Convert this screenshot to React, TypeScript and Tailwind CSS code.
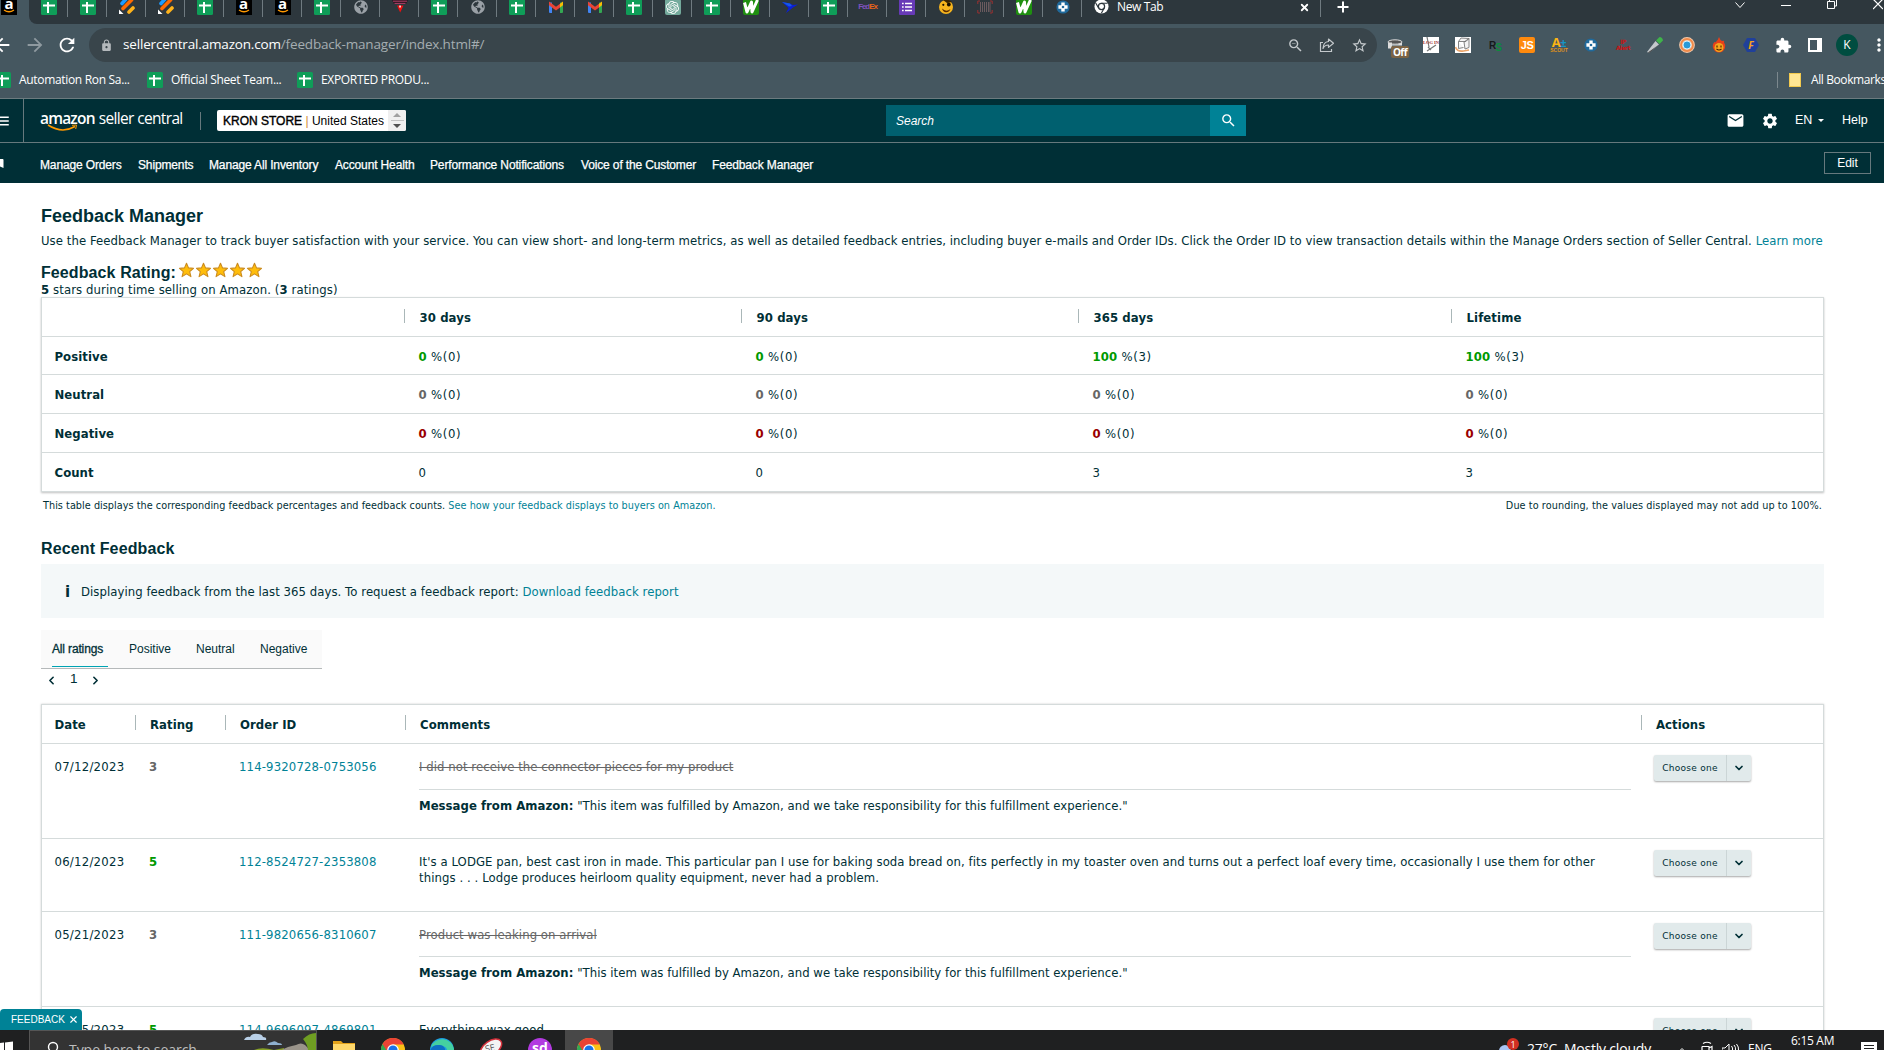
import { Fragment, type ReactNode } from "react";
import {
  MdArrowBack,
  MdArrowForward,
  MdBookmark,
  MdEmail,
  MdExtension,
  MdLock,
  MdMenu,
  MdMoreVert,
  MdRefresh,
  MdSearch,
  MdSettings,
  MdStarBorder,
  MdZoomOut,
} from "react-icons/md";
import { FaGlobeAmericas } from "react-icons/fa";
import { SiOpenai } from "react-icons/si";
import { ChevronDown, ChevronLeft, ChevronRight, ChevronUp, X } from "lucide-react";

type TabKind =
  | "sheets"
  | "pen"
  | "amazon"
  | "globe"
  | "triangle"
  | "gmail"
  | "openai"
  | "w"
  | "bird"
  | "fedex"
  | "forms"
  | "face"
  | "barcode"
  | "plus";

const tabs: TabKind[] = [
  "sheets",
  "sheets",
  "pen",
  "pen",
  "sheets",
  "amazon",
  "amazon",
  "sheets",
  "globe",
  "triangle",
  "sheets",
  "globe",
  "sheets",
  "gmail",
  "gmail",
  "sheets",
  "openai",
  "sheets",
  "w",
  "bird",
  "sheets",
  "fedex",
  "forms",
  "face",
  "barcode",
  "w",
  "plus",
];

function SheetsIcon() {
  return (
    <svg width="16" height="16" viewBox="0 0 16 16" className="shrink-0">
      <rect width="16" height="16" rx="1.5" fill="#0f9d58" />
      <path d="M2 6.5h12M7 3v11" stroke="#fff" strokeWidth="2" />
    </svg>
  );
}

function AmazonIcon() {
  return (
    <div className="relative flex h-4 w-4 shrink-0 items-center justify-center bg-black">
      <span className="-mt-[7px] font-['Open_Sans',sans-serif] text-[15px] leading-none font-bold text-white">
        a
      </span>
      <svg
        width="14"
        height="4"
        viewBox="0 0 14 4"
        className="absolute bottom-0.5 left-px"
      >
        <path d="M2 1q5 3.5 10 0" stroke="#ff9900" fill="none" strokeWidth="1.3" />
      </svg>
    </div>
  );
}

function PlusDisc() {
  return (
    <svg width="14" height="14" viewBox="0 0 14 14">
      <circle cx="7" cy="7" r="6.6" fill="#206a9c" />
      <path d="M7 2.4v9.2M2.4 7h9.2" stroke="#fff" strokeWidth="3.4" />
      <circle cx="7" cy="7" r="1.3" fill="#206a9c" />
    </svg>
  );
}

function ChromeIcon({ size = 22 }: { size?: number }) {
  return (
    <svg width={size} height={size} viewBox="0 0 24 24" className="shrink-0">
      <circle cx="12" cy="12" r="12" fill="#fbc116" />
      <path d="M1.6 6A12 12 0 0 0 12 24l5-9-5-3z" fill="#34a853" />
      <path d="M12 6.5h10.7A12 12 0 0 0 1.6 6l5.5 9z" fill="#ea4335" />
      <circle cx="12" cy="12" r="5.8" fill="#fff" />
      <circle cx="12" cy="12" r="4.6" fill="#1a73e8" />
    </svg>
  );
}

function TabIcon({ kind }: { kind: TabKind }) {
  switch (kind) {
    case "sheets":
      return <SheetsIcon />;
    case "amazon":
      return <AmazonIcon />;
    case "plus":
      return <PlusDisc />;
    case "pen":
      return (
        <svg width="16" height="16" viewBox="0 0 16 16">
          <g strokeWidth="3.6" strokeLinecap="round">
            <path d="M3 4.5 7 0" stroke="#1e9bff" />
            <path d="M4 9.5 12.5 1" stroke="#ff6a00" />
            <path d="M10 13l4-4" stroke="#ffb31a" />
          </g>
          <path d="M0 10.5V15h4.5z" fill="#fff" />
        </svg>
      );
    case "globe":
      return <FaGlobeAmericas className="h-[14px] w-[14px] text-[#9aa0a6]" />;
    case "triangle":
      return (
        <svg width="16" height="16" viewBox="0 0 16 16">
          <path d="M0 1h16l-2 4H2z" fill="#2a1520" />
          <path d="M1 2.2h14M2.5 4.4h11" stroke="#b04068" strokeWidth="1" />
          <path d="M5 6.5h6.5L8.2 13.5z" fill="#f01010" />
          <path d="M7.3 6.5h1.5v2H7.3z" fill="#fff" />
        </svg>
      );
    case "gmail":
      return (
        <svg width="16" height="16" viewBox="0 0 16 16">
          <path d="M1 3.5h3V14H2a1 1 0 0 1-1-1z" fill="#4285f4" />
          <path d="M12 3.5h3V13a1 1 0 0 1-1 1h-2z" fill="#34a853" />
          <path d="M12 4.8 15 2.5v3.7L12 8.4z" fill="#fbbc04" />
          <path d="M1 2.5 8 7.7l4-3V8.4L8 11.4 1 6.2z" fill="#ea4335" />
        </svg>
      );
    case "openai":
      return (
        <div className="flex h-4 w-4 items-center justify-center rounded-[2px] bg-[#74aa9c]">
          <SiOpenai className="h-[13px] w-[13px] text-white" />
        </div>
      );
    case "w":
      return (
        <svg width="16" height="16" viewBox="0 0 16 16">
          <rect width="16" height="16" rx="2" fill="#1f8f10" />
          <path
            d="M1.5 3.5 4 13 8.5 3l.5 10 5.5-12"
            fill="none"
            stroke="#fff"
            strokeWidth="3"
            strokeLinejoin="round"
          />
        </svg>
      );
    case "bird":
      return (
        <svg width="16" height="16" viewBox="0 0 16 16">
          <path d="M0 3l8 1.5 3 1.5 5-.5-5 3-2.5 2L4 14l2.5-5z" fill="#0a1fd8" />
          <path d="M0 3l8 1.5 2 2.5-3 .5z" fill="#1558e8" />
        </svg>
      );
    case "fedex":
      return (
        <span className="flex font-['Liberation_Sans',sans-serif] text-[8px] font-bold tracking-[-1.1px]">
          <span className="text-[#7d52bd]">Fed</span>
          <span className="text-[#e8641a]">Ex</span>
        </span>
      );
    case "forms":
      return (
        <svg width="16" height="16" viewBox="0 0 16 16">
          <rect width="16" height="16" rx="1" fill="#673ab7" />
          <path
            d="M3 4.5h1.7M6 4.5h7M3 8h1.7M6 8h7M3 11.5h1.7M6 11.5h7"
            stroke="#fff"
            strokeWidth="1.6"
          />
        </svg>
      );
    case "face":
      return (
        <svg width="16" height="16" viewBox="0 0 16 16">
          <circle cx="8" cy="8" r="7" fill="#f7b51d" />
          <path d="M5 1Q9-1 14 3L9 4z" fill="#3a2400" />
          <path d="M4 9.5q4 4 8.5.5-1.5 3.5-4.5 3.3T4 9.5z" fill="#5a2b00" />
          <circle cx="5.3" cy="5.8" r="1.1" fill="#1a1000" />
          <circle cx="10.8" cy="5.5" r="1.9" fill="#1a1000" />
        </svg>
      );
    case "barcode":
      return (
        <svg width="16" height="16" viewBox="0 0 16 16">
          <path
            d="M3.5 3v10M5.5 3v10M7.5 3v10M9.5 3v10M11.5 3v10M13 3v10"
            stroke="#6a5a5e"
            strokeWidth="1"
          />
          <path
            d="M3 2H.8v3M.8 11v3H3M13 2h2.2v3M15.2 11v3H13"
            fill="none"
            stroke="#9a3030"
          />
        </svg>
      );
  }
}

const bookmarks = [
  { label: "Automation Ron Sa...", width: "w-[152px]" },
  { label: "Official Sheet Team...", width: "w-[150px]" },
  { label: "EXPORTED PRODU...", width: "w-[150px]" },
];

function Cell({ children }: { children: ReactNode }) {
  return (
    <div className="flex h-8 w-8 shrink-0 items-center justify-center">
      {children}
    </div>
  );
}

function BrowserChrome() {
  return (
    <div className="h-[98px] bg-[#455760] font-['Open_Sans',sans-serif] text-white">
      {/* Tab strip */}
      <div className="flex h-6">
        <div className="w-[29px] shrink-0 bg-[#455760] pl-px">
          <div className="-mt-px">
            <AmazonIcon />
          </div>
        </div>
        <div className="flex min-w-0 flex-1 rounded-bl-lg bg-[#2d373d]">
          {tabs.map((kind, i) => (
            <div
              key={i}
              className="flex h-[17px] w-[39px] shrink-0 items-center justify-center border-r border-[#6f7a80]"
            >
              <div className="-mt-[3px] ml-px">
                <TabIcon kind={kind} />
              </div>
            </div>
          ))}
          <div className="flex h-[17px] w-[239px] shrink-0 items-center border-r border-[#6f7a80] pl-3">
            <svg width="15" height="15" viewBox="0 0 16 16" className="-mt-1">
              <circle cx="8" cy="8" r="7.5" fill="#fff" />
              <circle cx="8" cy="8" r="3.3" fill="#fff" stroke="#2d373d" strokeWidth="1.3" />
              <path
                d="M8 4.5h6.5M5 9.7 1.8 4.2M11 9.7 7.8 15.3"
                stroke="#2d373d"
                strokeWidth="1.2"
              />
            </svg>
            <span className="-mt-[3px] ml-2 text-[12px] leading-none tracking-[-0.35px]">
              New Tab
            </span>
            <X className="-mt-[3px] ml-auto mr-2.5 h-[11px] w-[11px]" strokeWidth={4} />
          </div>
          <svg width="12" height="12" viewBox="0 0 12 12" className="ml-4 mt-px">
            <path d="M6 .5v11M.5 6h11" stroke="#fff" strokeWidth="2" />
          </svg>
          <div className="ml-auto mr-px flex shrink-0 items-center gap-[36px] self-start">
            <svg width="10" height="8" viewBox="0 0 10 8">
              <path d="M.5 1.5 5 6.5l4.5-5" fill="none" stroke="#fff" />
            </svg>
            <svg width="10" height="8" viewBox="0 0 10 8">
              <path d="M0 4.5h10" stroke="#fff" />
            </svg>
            <svg width="10" height="10" viewBox="0 0 10 10">
              <path d="M.5 1.5h7v7h-7zM2.5 1V-.5M9.500 0v6H8" fill="none" stroke="#fff" />
            </svg>
            <svg width="10" height="10" viewBox="0 0 10 10">
              <path d="M0-1l10 10M10-1 0 9" stroke="#fff" strokeWidth="1.2" />
            </svg>
          </div>
        </div>
      </div>

      {/* Address bar */}
      <div className="flex h-[42px] items-center overflow-hidden">
        <div className="flex w-[89px] shrink-0 items-center">
          <MdArrowBack className="-ml-[9px] h-[22px] w-[22px] shrink-0" />
          <MdArrowForward className="ml-[11px] h-[22px] w-[22px] shrink-0 text-[#8f9aa0]" />
          <MdRefresh className="ml-[10px] h-[22px] w-[22px] shrink-0" />
        </div>
        <div className="flex h-[34px] w-[1288px] shrink-0 items-center rounded-full bg-[#39454b] pl-[11px]">
          <MdLock className="h-[13px] w-[13px] text-[#b4b9bc]" />
          <div className="ml-[10px] text-[13.5px] leading-none tracking-[-0.17px] text-[#a5adb1]">
            <span className="text-white">sellercentral.amazon.com</span>
            /feedback-manager/index.html#/
          </div>
          <div className="ml-auto flex pr-[2px] text-[#c4c9cc]">
            <Cell>
              <MdZoomOut className="h-[17px] w-[17px]" />
            </Cell>
            <Cell>
              <svg width="16" height="16" viewBox="0 0 16 16" fill="none" stroke="currentColor">
                <path d="M4 5.5H1.5v9h11V12" strokeWidth="1.2" />
                <path
                  d="M9.5 2l5 4.2-5 4.2V8Q5.5 8 4 11.5 4.3 5 9.5 4.5z"
                  strokeWidth="1.2"
                  strokeLinejoin="round"
                />
              </svg>
            </Cell>
            <Cell>
              <MdStarBorder className="h-[17px] w-[17px]" />
            </Cell>
          </div>
        </div>
        <div className="ml-[6px] flex">
          <Cell>
            <div className="relative h-4 w-4">
              <svg width="18" height="14" viewBox="0 0 18 14" className="absolute -left-1 top-0.5">
                <ellipse cx="8" cy="3" rx="7" ry="2.2" fill="#555" stroke="#ddd" />
                <path d="M1 3.5h4v6H1zM1 3.5Q8 8 15 3.5v3H5" fill="#ddd" />
              </svg>
              <span className="absolute left-0 top-[9px] flex h-3 w-[18px] items-center justify-center rounded-[2px] bg-[#7b6345] text-[10px] leading-none font-bold tracking-[-0.5px]">
                Off
              </span>
            </div>
          </Cell>
          <Cell>
            <div className="relative flex h-4 w-4 items-center justify-center overflow-hidden bg-white">
              <svg width="16" height="16" viewBox="0 0 16 16" className="absolute">
                <path d="M4 0l2 10M4 14l9-6M5 10l3 3" stroke="#777" strokeWidth="1.2" />
              </svg>
              <span className="relative -mt-1 whitespace-nowrap font-['Liberation_Serif',serif] text-[4.5px] leading-none font-bold text-[#a03030]">
                LOG IN
              </span>
            </div>
          </Cell>
          <Cell>
            <svg width="16" height="16" viewBox="0 0 16 16">
              <rect width="16" height="16" fill="#fff" />
              <path
                d="M3.5 4.5 6 1l8 .5-3 3zM3.5 4.5v7l5-1M9 5l5-3.5v9l-4 1.5z"
                fill="#f4f4f4"
                stroke="#777"
                strokeWidth=".9"
              />
              <path d="M.5 10q1.5 5 8 4l5.5-1" fill="none" stroke="#eba56a" strokeWidth="1.6" />
            </svg>
          </Cell>
          <Cell>
            <span className="font-['Liberation_Sans',sans-serif] text-[10px] font-bold tracking-[-1px]">
              <span className="text-[#15191b]">R</span>
              <span className="relative top-0.5 text-[#0c8a3e]">S</span>
            </span>
          </Cell>
          <Cell>
            <span className="flex h-4 w-4 items-center justify-center rounded-[2px] bg-[#ff8a0d] font-['Liberation_Sans',sans-serif] text-[11px] leading-none font-bold tracking-[-0.5px]">
              JS
            </span>
          </Cell>
          <Cell>
            <span className="flex flex-col items-center font-bold">
              <span className="text-[13px] leading-[10px] tracking-[-0.5px] text-[#fcb514]">
                A<span className="text-[11px] text-[#1596c8]">±</span>
              </span>
              <span className="font-['Liberation_Sans',sans-serif] text-[5px] leading-[5px] text-[#e0941a]">
                SCOUT
              </span>
            </span>
          </Cell>
          <Cell>
            <PlusDisc />
          </Cell>
          <Cell>
            <span className="text-center font-['DejaVu_Sans',sans-serif] text-[6px] leading-[6px] font-bold tracking-[-0.5px] text-[#c81414]">
              IP
              <br />
              Alert
            </span>
          </Cell>
          <Cell>
            <svg width="16" height="16" viewBox="0 0 16 16">
              <path d="M8.5 4l3.5 3.5L2 16l-2-1z" fill="#c4c9cc" />
              <path d="M12 7.5 2 16l-1-.5z" fill="#333" />
              <path d="M9 3.5 12.5 0q3 0 3.5 3.5L12.5 7z" fill="#3fb34a" />
            </svg>
          </Cell>
          <Cell>
            <svg width="16" height="16" viewBox="0 0 16 16">
              <circle cx="8" cy="8" r="7.9" fill="#f4c8a8" />
              <circle cx="8" cy="8" r="6" fill="none" stroke="#f08a4a" strokeWidth="1.8" />
              <circle cx="8" cy="8" r="4" fill="#2a9ad8" stroke="#d9f0fa" />
            </svg>
          </Cell>
          <Cell>
            <svg width="14" height="16" viewBox="0 0 14 16">
              <path
                d="M7 0q1 3 3 4 3-1 2 1.5Q14 8 13 11 11 15.5 7 15.5T1 11Q0 7.5 2.5 5 4 6 4.5 4 6 3 7 0z"
                fill="#e8401a"
              />
              <circle cx="7" cy="10.5" r="4.5" fill="#f6a51c" />
              <path
                d="M5 8.5v2M9 8.5v2M4.5 12q2.5 2 5 0"
                fill="none"
                stroke="#4a1a00"
                strokeWidth="1.1"
              />
            </svg>
          </Cell>
          <Cell>
            <span className="flex h-[14px] w-4 items-center justify-center bg-[#20409a] text-[10px] leading-none font-bold italic text-[#f5a01c] [clip-path:polygon(25%_0,75%_0,100%_50%,75%_100%,25%_100%,0_50%)]">
              F
            </span>
          </Cell>
          <Cell>
            <MdExtension className="h-[17px] w-[17px]" />
          </Cell>
          <Cell>
            <div className="h-[14px] w-[14px] border-2 border-r-[5px] border-white" />
          </Cell>
          <Cell>
            <div className="flex h-[22px] w-[22px] items-center justify-center rounded-full bg-[#004d40] text-[12px] leading-none">
              K
            </div>
          </Cell>
          <Cell>
            <MdMoreVert className="h-[20px] w-[20px] shrink-0" />
          </Cell>
        </div>
      </div>

      {/* Bookmarks */}
      <div className="flex h-7 items-center text-[12px] leading-none">
        <div className="-ml-[5px] flex">
          {bookmarks.map((b) => (
            <div
              key={b.label}
              className={`flex shrink-0 items-center whitespace-nowrap tracking-[-0.32px] ${b.width}`}
            >
              <SheetsIcon />
              <span className="ml-2">{b.label}</span>
            </div>
          ))}
        </div>
        <div className="ml-auto flex h-4 w-[107px] shrink-0 items-center border-l border-[#7c888e] pl-[11px]">
          <div className="h-[14px] w-3 shrink-0 border border-[#f3ca4e] bg-[#ffe694]" />
          <span className="ml-[10px] whitespace-nowrap tracking-[-0.4px]">All Bookmarks</span>
        </div>
      </div>
    </div>
  );
}

const quickLinks = [
  { label: "Manage Orders", width: "w-[98px]" },
  { label: "Shipments", width: "w-[71px]" },
  { label: "Manage All Inventory", width: "w-[126px]" },
  { label: "Account Health", width: "w-[95px]" },
  { label: "Performance Notifications", width: "w-[151px]" },
  { label: "Voice of the Customer", width: "w-[131px]" },
  { label: "Feedback Manager", width: "w-[110px]" },
];

function SellerHeader() {
  return (
    <div className="border-t border-[#6c7b7f] bg-[#002f36] font-['Liberation_Sans',sans-serif] text-white">
      <div className="flex h-[44px] items-center border-b border-[#66797d]">
        <div className="flex h-full w-6 shrink-0 items-center border-r border-[#66797d]">
          <MdMenu className="-ml-[7px] h-[18px] w-[18px]" />
        </div>
        <div className="relative ml-4 h-[23px] w-[144px] shrink-0 whitespace-nowrap">
          <div className="flex items-baseline gap-1 font-['Open_Sans',sans-serif] text-[15.5px] leading-[18px]">
            <span className="font-semibold tracking-[-0.8px]">amazon</span>
            <span className="tracking-[-0.65px]">seller central</span>
          </div>
          <svg width="34" height="8" viewBox="0 0 34 8" className="absolute left-[7px] top-[15px]">
            <path d="M1 1q14 9 27 1.5" fill="none" stroke="#f90" strokeWidth="1.5" />
            <path d="M25 1.3l4.500-.3-.8 4" fill="none" stroke="#f90" />
          </svg>
        </div>
        <div className="ml-4 h-[18px] w-px bg-[#66797d]" />
        <div className="ml-4 flex h-[21px] w-[189px] shrink-0 items-center rounded-[2px] bg-white pl-[6px] text-[12px] leading-none text-black">
          <span className="whitespace-nowrap">
            <span className="[-webkit-text-stroke:0.4px_#000]">KRON STORE</span>{" "}
            <span className="text-[#d08a30]">|</span> United States
          </span>
          <div className="ml-auto flex h-full w-[18px] flex-col items-center justify-center gap-[3px] rounded-r-[2px] bg-[#efefef]">
            <div className="h-0 w-0 border-x-4 border-b-4 border-x-transparent border-b-[#a0a0a0]" />
            <div className="h-px w-[13px] bg-[#c0c0c0]" />
            <div className="h-0 w-0 border-x-4 border-t-4 border-x-transparent border-t-[#505050]" />
          </div>
        </div>
        <div className="ml-[480px] flex h-[31px] w-[360px] shrink-0 bg-[#00606f]">
          <div className="flex flex-1 items-center pl-[10px] text-[12px] italic">Search</div>
          <div className="flex w-9 items-center justify-center bg-[#008296]">
            <MdSearch className="h-[17px] w-[17px]" />
          </div>
        </div>
        <MdEmail className="ml-auto h-[19px] w-[19px] shrink-0" />
        <MdSettings className="ml-[16px] h-[18px] w-[18px] shrink-0" />
        <div className="ml-4 flex w-[47px] shrink-0 items-center text-[12.5px]">
          EN
          <div className="ml-[6px] h-0 w-0 border-x-[3.5px] border-t-[3.5px] border-x-transparent border-t-white" />
        </div>
        <div className="w-[42px] shrink-0 text-[12.5px]">Help</div>
      </div>
      <div className="flex h-[40px] items-center text-[12px]">
        <MdBookmark className="-ml-[6px] h-[15px] w-[12px] shrink-0" />
        <div className="ml-[34px] mt-[3px] flex whitespace-nowrap tracking-[-0.14px] [-webkit-text-stroke:0.25px_white]">
          {quickLinks.map((l) => (
            <span key={l.label} className={`shrink-0 ${l.width}`}>
              {l.label}
            </span>
          ))}
        </div>
        <div className="ml-auto mr-[13px] flex h-[22px] w-[47px] items-center justify-center border border-[#66797d] text-[12px]">
          Edit
        </div>
      </div>
    </div>
  );
}

const periods = [
  { label: "30 days", positive: 0, positiveCount: 0, count: 0 },
  { label: "90 days", positive: 0, positiveCount: 0, count: 0 },
  { label: "365 days", positive: 100, positiveCount: 3, count: 3 },
  { label: "Lifetime", positive: 100, positiveCount: 3, count: 3 },
];

const summaryGrid = "grid grid-cols-[362px_337px_337px_373px_1fr] items-center";

function Percent({
  value,
  count,
  color,
}: {
  value: number;
  count: number;
  color: string;
}) {
  return (
    <div className="pl-[14.5px] tracking-[0.6px]">
      <b className={`tracking-[0.1px] ${color}`}>{value}</b> %({count})
    </div>
  );
}

function SummaryTable() {
  return (
    <div className="-mt-px border border-[#d5dbdb] bg-white shadow-[0_1px_2px_rgba(0,0,0,0.25)]">
      <div className={`h-[39px] border-b border-[#d5dbdb] font-bold ${summaryGrid}`}>
        <div />
        {periods.map((p) => (
          <div key={p.label} className="flex items-center gap-[14.5px] pt-px tracking-[0.1px]">
            <div className="-mt-1 h-[14px] w-px bg-[#aab7b8]" />
            {p.label}
          </div>
        ))}
      </div>
      <div className={`h-[38px] border-b border-[#d5dbdb] pt-[2px] ${summaryGrid}`}>
        <div className="pl-[12.5px] font-bold">Positive</div>
        {periods.map((p) => (
          <Percent
            key={p.label}
            value={p.positive}
            count={p.positiveCount}
            color="text-[#090]"
          />
        ))}
      </div>
      <div className={`h-[39px] border-b border-[#d5dbdb] pt-px ${summaryGrid}`}>
        <div className="pl-[12.5px] font-bold">Neutral</div>
        {periods.map((p) => (
          <Percent key={p.label} value={0} count={0} color="text-[#666]" />
        ))}
      </div>
      <div className={`h-[39px] border-b border-[#d5dbdb] pt-px ${summaryGrid}`}>
        <div className="pl-[12.5px] font-bold">Negative</div>
        {periods.map((p) => (
          <Percent key={p.label} value={0} count={0} color="text-[#900]" />
        ))}
      </div>
      <div className={`h-[38px] pt-px ${summaryGrid}`}>
        <div className="pl-[12.5px] font-bold">Count</div>
        {periods.map((p) => (
          <div key={p.label} className="pl-[14.5px]">
            {p.count}
          </div>
        ))}
      </div>
    </div>
  );
}

interface Feedback {
  date: string;
  rating: number;
  orderId: string;
  comment: string;
  removed?: boolean;
  height: string;
}

const feedback: Feedback[] = [
  {
    date: "07/12/2023",
    rating: 3,
    orderId: "114-9320728-0753056",
    comment: "I did not receive the connector pieces for my product",
    removed: true,
    height: "h-[95px]",
  },
  {
    date: "06/12/2023",
    rating: 5,
    orderId: "112-8524727-2353808",
    comment:
      "It's a LODGE pan, best cast iron in made. This particular pan I use for baking soda bread on, fits perfectly in my toaster oven and turns out a perfect loaf every time, occasionally I use them for other things . . . Lodge produces heirloom quality equipment, never had a problem.",
    height: "h-[72.6px]",
  },
  {
    date: "05/21/2023",
    rating: 3,
    orderId: "111-9820656-8310607",
    comment: "Product was leaking on arrival",
    removed: true,
    height: "h-[95.4px]",
  },
  {
    date: "05/15/2023",
    rating: 5,
    orderId: "114-9696097-4869801",
    comment: "Everything wax good",
    height: "h-[73px]",
  },
];

const feedbackGrid = "grid grid-cols-[93px_90px_180px_1236px_1fr]";

function ChooseOne() {
  return (
    <div className="flex h-[26px] w-[97px] rounded-[2px] bg-[#e1eaeb] font-['DejaVu_Sans',sans-serif] text-[9px] shadow-[0_1px_2px_rgba(0,0,0,0.35)]">
      <div className="flex w-[73px] items-center justify-center whitespace-nowrap border-r border-[#cbd5d6] tracking-[0.25px]">
        Choose one
      </div>
      <div className="flex flex-1 items-center justify-center">
        <ChevronDown className="h-3 w-3" strokeWidth={3.5} />
      </div>
    </div>
  );
}

function FeedbackTable() {
  return (
    <div className="border border-[#d5dbdb] bg-white shadow-[0_0_2px_rgba(0,0,0,0.2)]">
      <div
        className={`h-[39px] items-center border-b border-[#d5dbdb] font-bold ${feedbackGrid}`}
      >
        <div className="pl-[12.5px] pt-[2px]">Date</div>
        {["Rating", "Order ID", "Comments", "Actions"].map((h) => (
          <div key={h} className="flex items-center gap-[14px]">
            <div className="-mt-[3px] h-[15px] w-px bg-[#aab7b8]" />
            <span className="pt-[2px]">{h}</span>
          </div>
        ))}
      </div>
      {feedback.map((f) => (
        <div
          key={f.orderId}
          className={`border-b border-[#d5dbdb] pt-[15px] ${feedbackGrid} ${f.height}`}
        >
          <div className="pl-[12.5px] tracking-[0.25px]">{f.date}</div>
          <div
            className={`pl-[14px] font-bold ${f.rating > 3 ? "text-[#090]" : "text-[#666]"}`}
          >
            {f.rating}
          </div>
          <div className="pl-[14px] tracking-[0.14px] text-[#008296]">{f.orderId}</div>
          <div className="pl-[14px] pr-[10px]">
            <div className={f.removed ? "text-[#666] line-through" : "pr-5 tracking-[0.075px]"}>
              {f.comment}
            </div>
            {f.removed && (
              <Fragment>
                <div className="mt-[13.5px] h-px bg-[#d5dbdb]" />
                <div className="mt-2 tracking-[0.03px]">
                  <b>Message from Amazon:</b> "This item was fulfilled by Amazon, and we take
                  responsibility for this fulfillment experience."
                </div>
              </Fragment>
            )}
          </div>
          <div className="-mt-1 pl-[13px]">
            <ChooseOne />
          </div>
        </div>
      ))}
    </div>
  );
}

function RatingStar() {
  return (
    <svg width="17" height="16" viewBox="0 0 17 16">
      <path
        d="M8.5 1.3l2 4.6 5 .5-3.8 3.3 1.2 4.9-4.4-2.7-4.4 2.7 1.2-4.9L1.500 6.400l5-.5z"
        fill="#ffbd0a"
        stroke="#cb8b1e"
        strokeWidth="1.1"
        strokeLinejoin="round"
      />
    </svg>
  );
}

function Content() {
  return (
    <div className="pl-[41px] pr-[60px] font-['DejaVu_Sans',sans-serif] text-[11.7px] leading-4 tracking-[0.055px] text-[#002f36]">
      <h1 className="pt-[23px] font-['Liberation_Sans',sans-serif] text-[18px] leading-5 font-bold tracking-normal">
        Feedback Manager
      </h1>
      <p className="mt-[7px] whitespace-nowrap tracking-[0.056px]">
        Use the Feedback Manager to track buyer satisfaction with your service. You can view short-
        and long-term metrics, as well as detailed feedback entries, including buyer e-mails and
        Order IDs. Click the Order ID to view transaction details within the Manage Orders section
        of Seller Central. <a className="text-[#008296]">Learn more</a>
      </p>
      <div className="mt-[14px] flex h-[19px] items-center">
        <h2 className="pt-px font-['Liberation_Sans',sans-serif] text-[16px] leading-5 font-bold tracking-[0.1px]">
          Feedback Rating:
        </h2>
        <div className="-mt-[5px] ml-[2px] flex">
          {[1, 2, 3, 4, 5].map((n) => (
            <RatingStar key={n} />
          ))}
        </div>
      </div>
      <p className="tracking-[0.09px]">
        <b>5</b> stars during time selling on Amazon. (<b>3</b> ratings)
      </p>
      <SummaryTable />
      <div className="mt-[7px] flex h-[14px] items-center justify-between pl-[2px] pr-[2px] text-[9.7px] tracking-[0.035px]">
        <span>
          This table displays the corresponding feedback percentages and feedback counts.{" "}
          <a className="text-[#008296]">See how your feedback displays to buyers on Amazon.</a>
        </span>
        <span className="tracking-[0.08px]">
          Due to rounding, the values displayed may not add up to 100%.
        </span>
      </div>

      <h2 className="mt-[26px] font-['Liberation_Sans',sans-serif] text-[16px] leading-5 font-bold tracking-[0.13px]">
        Recent Feedback
      </h2>
      <div className="mt-[5px] flex h-[54px] items-center bg-[#f4f8f9] pl-[24px] pt-px">
        <span className="w-4 text-[15px] font-bold">i</span>
        <span className="tracking-[0.05px]">
          Displaying feedback from the last 365 days. To request a feedback report:{" "}
          <a className="text-[#008296]">Download feedback report</a>
        </span>
      </div>
      <div className="mt-3 flex h-[39px] w-[281px] items-start border-b border-[#b5b9ba] bg-[#fafafa] pl-[11px] font-['Liberation_Sans',sans-serif] text-[12px] leading-[38px] tracking-normal">
        <div className="h-[37px] w-14 whitespace-nowrap border-b border-[#00a4b4] tracking-[-0.15px] [-webkit-text-stroke:0.3px_#002f36]">
          All ratings
        </div>
        <div className="ml-[21px] w-[67px]">Positive</div>
        <div className="w-[64px]">Neutral</div>
        <div>Negative</div>
      </div>
      <div className="flex h-[35px] items-start pl-1 pt-[2px] font-['Liberation_Sans',sans-serif] text-[13.5px]">
        <ChevronLeft className="mt-[3px] h-[13px] w-[13px]" strokeWidth={3} />
        <span className="ml-3 w-[15px]">1</span>
        <ChevronRight className="mt-[3px] ml-1 h-[13px] w-[13px]" strokeWidth={3} />
      </div>
      <FeedbackTable />
    </div>
  );
}

function Taskbar() {
  return (
    <div className="flex h-5 items-start overflow-hidden bg-[#1f2021] font-['Open_Sans',sans-serif] text-white">
      <svg width="14" height="20" viewBox="0 0 14 20" className="shrink-0">
        <path d="M0 13l4-.5V20H0zM5 12.4l8-.9V20H5z" fill="#fff" />
      </svg>
      <div className="ml-[15px] flex h-full w-[288px] shrink-0 items-start overflow-hidden border border-b-0 border-[#555] bg-[#333]">
        <svg width="14" height="20" viewBox="0 0 14 20" className="ml-[15px] shrink-0">
          <circle cx="8" cy="16" r="4.5" fill="none" stroke="#fff" strokeWidth="1.4" />
        </svg>
        <span className="ml-[10px] mt-[9px] whitespace-nowrap text-[14px] leading-[20px] tracking-[-0.05px] text-[#bdbdbd]">
          Type here to search
        </span>
        <svg width="72" height="20" viewBox="0 0 72 20" className="ml-auto shrink-0">
          <path d="M0 9q2-4 6-3 2-4 8-3 4 0 5 3 4 0 3 3z" fill="#b8cfe6" />
          <path d="M23 14q2-3 5-3 3-2 6 1 4 0 4 2z" fill="#8fb0cf" />
          <path d="M8 20q8-5 22-1l10-2V20z" fill="#87a128" />
          <path d="M36 20q6-4 16-6 5-3 9 0l6 6z" fill="#9a948a" />
          <path d="M59 8q6-6 13-6v18h-8q0-6-5-12z" fill="#6f9e22" />
        </svg>
      </div>
      <svg width="22" height="20" viewBox="0 0 22 20" className="ml-4 shrink-0">
        <path d="M0 11h8l2 2h12v7H0z" fill="#e3a21a" />
        <path d="M0 14h22v6H0z" fill="#ffd86b" />
      </svg>
      <div className="ml-[26px] mt-2 shrink-0">
        <ChromeIcon size={24} />
      </div>
      <svg width="24" height="24" viewBox="0 0 24 24" className="ml-[25px] mt-2 shrink-0">
        <circle cx="12" cy="12" r="12" fill="#1b9de2" />
        <path d="M1 9A12 12 0 0 1 24 11q0 6-8 5 3-6-3-8T1 9z" fill="#45d0a0" />
        <path d="M0 13Q2 6 10 7q6 1 5 7-8-5-9 4z" fill="#0f6fc4" />
      </svg>
      <svg width="24" height="20" viewBox="0 0 24 20" className="ml-[25px] shrink-0">
        <ellipse
          cx="12"
          cy="18"
          rx="12"
          ry="7"
          fill="#f4f4f4"
          stroke="#d32f3a"
          strokeWidth="1.5"
          transform="rotate(-35 12 18)"
        />
        <text
          x="6"
          y="21"
          fontFamily="Open Sans"
          fontSize="9"
          fill="#555"
          transform="rotate(-12 12 18)"
        >
          SE
        </text>
      </svg>
      <div className="ml-[25px] mt-2 flex h-6 w-6 shrink-0 items-start justify-center rounded-full bg-[#b23ae0] pt-[3px] text-[14px] leading-none font-bold">
        sd
      </div>
      <div className="ml-[13px] flex h-5 w-12 shrink-0 justify-center bg-[#484848] pt-2">
        <ChromeIcon size={24} />
      </div>
      <div className="relative ml-[886px] h-5 w-5 shrink-0">
        <div className="absolute left-0 top-[15px] h-3 w-3 rounded-full bg-[#a8c4f4]" />
        <div className="absolute left-[8px] top-2 flex h-[12px] w-[12px] items-center justify-center rounded-full bg-[#d13022] text-[9px] leading-none">
          1
        </div>
      </div>
      <span className="ml-2 mt-[9px] w-[149px] shrink-0 whitespace-pre text-[14px] leading-5 tracking-[-0.2px]">
        27°C  Mostly cloudy
      </span>
      <ChevronUp className="mt-[14px] h-3 w-3 shrink-0" />
      <svg
        width="14"
        height="20"
        viewBox="0 0 14 20"
        className="ml-3 shrink-0"
        fill="none"
        stroke="#fff"
      >
        <path d="M3 13.5q4-2.500 8 0M2 16.500h7V20M2 16.500V20M9 18l3-1.500V20" strokeWidth="1.2" />
      </svg>
      <svg
        width="18"
        height="20"
        viewBox="0 0 18 20"
        className="ml-[8px] shrink-0"
        fill="none"
        stroke="#fff"
      >
        <path d="M0 20v-2h3l4-4v6M9.500 16q1.500 2 1 4M12 15q2 2 1.500 5M14.500 14q2.500 3 2 6" />
      </svg>
      <span className="ml-[8px] mt-[11px] w-[43px] shrink-0 text-[12px] leading-4 tracking-[-0.2px]">
        ENG
      </span>
      <span className="mt-[3px] w-[70px] shrink-0 whitespace-nowrap text-[12px] leading-4 tracking-[-0.3px]">
        6:15 AM
      </span>
      <svg width="16" height="20" viewBox="0 0 16 20" className="shrink-0">
        <path d="M0 12h16v8H0z" fill="#fff" />
        <path d="M3 15.5h10M3 18.5h10" stroke="#1f2021" />
      </svg>
    </div>
  );
}

export default function App() {
  return (
    <div className="flex h-[1050px] w-[1884px] flex-col overflow-hidden bg-white">
      <BrowserChrome />
      <SellerHeader />
      <div className="relative min-h-0 flex-1 overflow-hidden">
        <Content />
        <div className="absolute bottom-0 left-0 flex h-[21px] w-[82px] items-center rounded-t-[4px] bg-[#008296] pl-[11px] font-['Liberation_Sans',sans-serif] text-[10px] text-white">
          FEEDBACK
          <X className="-mr-1 ml-[3px] h-[11px] w-[11px]" strokeWidth={2.5} />
        </div>
      </div>
      <Taskbar />
    </div>
  );
}
